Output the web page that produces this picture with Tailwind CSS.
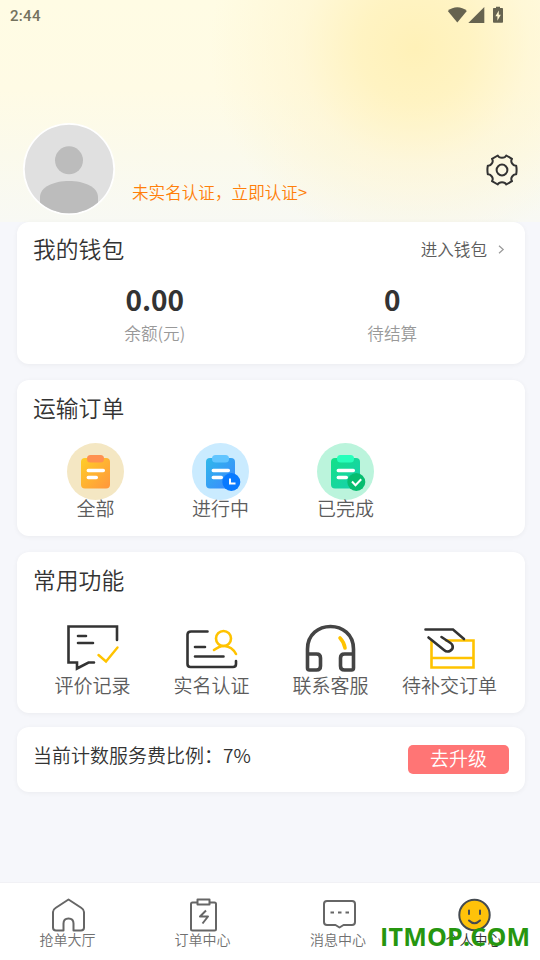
<!DOCTYPE html>
<html lang="zh-CN">
<head>
<meta charset="utf-8">
<meta name="viewport" content="width=device-width">
<title>个人中心</title>
<script src="https://cdn.jsdelivr.net/npm/@tailwindcss/browser@4"></script>
</head>
<body class="w-[540px] h-[960px] overflow-hidden bg-[#f6f7fb] font-['Noto_Sans_CJK_SC',sans-serif] font-[350] text-[#333]">
<div class="relative flex flex-col h-[960px]">
  <header class="h-[222px] shrink-0 flex flex-col bg-[radial-gradient(circle_at_415px_48px,#fff1b8_0px,#fff2bddd_55px,#fff3c878_115px,#fff6d600_205px),linear-gradient(180deg,#fffce4_0%,#fffbe5_40%,#fbfaec_70%,#f8f9f4_100%)]">
    <div class="h-8 flex items-center justify-between pl-[10px] pr-[35px]">
      <span class="font-['Roboto',sans-serif] font-medium text-[15px] leading-5 tracking-[0.3px] text-[#74725e]">2:44</span>
      <svg class="w-[58px] h-5 -mt-0.5" viewBox="0 0 58 20" fill="#666350">
        <path d="M.8 6C6.3 1.100 14.3 1.100 19.8 6L10.300 17.500z"/>
        <path d="M37.300 2.100v15.800H21.300z"/>
        <path fill-rule="evenodd" d="M49 3V1.700h4v1.300h2.200q.8 0 .8.8v13.200q0 .8-.8.8h-8.400q-.8 0-.8-.8V3.800q0-.8.8-.8zM51.800 5.600 48.400 11.300h2v4.500l3.400-6h-2z"/>
      </svg>
    </div>
    <div class="flex-1 flex items-end pl-[23px] pr-[22px]">
      <svg class="w-[92px] h-[92px] mb-[7px]" viewBox="0 0 92 92">
        <defs><clipPath id="face"><circle cx="46" cy="46" r="44.300"/></clipPath></defs>
        <circle cx="46" cy="46" r="46" fill="#fff"/>
        <g clip-path="url(#face)"><path fill="#e0e0e0" d="M0 0h92v92H0z"/><circle cx="46" cy="37.300" r="14" fill="#bcbcbc"/><path d="M17 92V74C17 64 31 58 46 58s29 6 29 16v18z" fill="#bcbcbc"/></g>
      </svg>
      <span class="ml-[17px] mb-[18px] text-[16.6px] leading-6 text-[#ff7f0a]">未实名认证，立即认证&gt;</span>
      <svg class="ml-auto mb-9 w-8 h-8" viewBox="0 0 32 32" fill="none" stroke="#333" stroke-width="2" stroke-linejoin="round">
        <path d="M11.800 1.500C13 4.500 19 4.500 20.200 1.500L26 4.800C24 7.500 26.800 12 30.200 11.700Q31 16 30.200 20.300C26.800 20 24 24.500 26 27.200L20.200 30.500C19 27.500 13 27.500 11.800 30.500L6 27.200C8 24.500 5.200 20 1.800 20.300Q1 16 1.800 11.700C5.200 12 8 7.500 6 4.800z"/>
        <circle cx="16" cy="16" r="5.400"/>
      </svg>
    </div>
  </header>

  <main class="flex-1 pl-[17px] pr-[15px]">
    <section class="h-[142px] rounded-xl bg-white shadow-[0_1px_5px_#0000000d] px-4">
      <div class="h-[55px] flex items-center justify-between pr-1">
        <h2 class="text-[22.8px] leading-8 pb-0.5">我的钱包</h2>
        <a class="flex items-center gap-[10px] text-[16.6px] text-[#5c5c5c]">进入钱包
          <svg class="w-2 h-[9px]" viewBox="0 0 8 9" fill="none" stroke="#999" stroke-width="1.200"><path d="m2 .7 4.200 3.800L2 8.300"/></svg>
        </a>
      </div>
      <div class="grid grid-cols-2 pt-[7px] pl-[3px] -mr-0.5 text-center">
        <div><div class="text-[28px] leading-[30px] font-bold">0.00</div><div class="mt-[7px] text-[16.6px] leading-6 text-[#999]">余额(元)</div></div>
        <div><div class="text-[28px] leading-[30px] font-bold">0</div><div class="mt-[7px] text-[16.6px] leading-6 text-[#999]">待结算</div></div>
      </div>
    </section>

    <section class="mt-4 h-[156px] rounded-xl bg-white shadow-[0_1px_5px_#0000000d]">
      <h2 class="h-[57px] flex items-center pl-4 text-[22.8px]">运输订单</h2>
      <div class="mt-1.5 grid grid-cols-[125px_125px_125px] pl-4 text-[19px] text-[#5c5c5c]">
        <div class="flex flex-col items-center">
          <svg class="w-[57px] h-[57px]" viewBox="0 0 57 57"><defs><linearGradient id="orange" x2="1" y2="1"><stop stop-color="#ffce27"/><stop offset="1" stop-color="#ff963d"/></linearGradient></defs>
            <circle cx="28.500" cy="28.500" r="28.500" fill="#f4e7c3"/><rect x="14" y="15" width="29" height="30.500" rx="4" fill="url(#orange)"/><rect x="20" y="12" width="17" height="7.500" rx="3.500" fill="#ff9150"/><path d="M21.300 27.500h15M21.300 34.500h8" stroke="#fff" stroke-width="3.500" stroke-linecap="round"/></svg>
          <span class="leading-[16px]">全部</span>
        </div>
        <div class="flex flex-col items-center">
          <svg class="w-[57px] h-[57px]" viewBox="0 0 57 57"><defs><linearGradient id="blue" x2="1" y2="1"><stop stop-color="#2fb9ea"/><stop offset="1" stop-color="#3c86ff"/></linearGradient></defs>
            <circle cx="28.500" cy="28.500" r="28.500" fill="#caebff"/><rect x="14" y="15" width="29" height="30.500" rx="4" fill="url(#blue)"/><rect x="20" y="12" width="17" height="7.500" rx="3.500" fill="#62c5ff"/><path d="M21.300 27.500h15M21.300 34.500h8" stroke="#fff" stroke-width="3.500" stroke-linecap="round"/><circle cx="39.300" cy="39" r="9" fill="#0879ff"/><path d="M38 35.500v5h5.500" fill="none" stroke="#fff" stroke-width="2"/></svg>
          <span class="leading-[16px]">进行中</span>
        </div>
        <div class="flex flex-col items-center">
          <svg class="w-[57px] h-[57px]" viewBox="0 0 57 57"><defs><linearGradient id="green" x2="1" y2="1"><stop stop-color="#13e187"/><stop offset="1" stop-color="#19ceb0"/></linearGradient></defs>
            <circle cx="28.500" cy="28.500" r="28.500" fill="#bbf4dc"/><rect x="14" y="15" width="29" height="30.500" rx="4" fill="url(#green)"/><rect x="20" y="12" width="17" height="7.500" rx="3.500" fill="#27ffbb"/><path d="M21.300 27.500h15M21.300 34.500h8" stroke="#fff" stroke-width="3.500" stroke-linecap="round"/><circle cx="39.300" cy="39" r="9" fill="#07bd70"/><path d="m35 38.500 3.500 3.700 5.700-6" fill="none" stroke="#fff" stroke-width="2"/></svg>
          <span class="leading-[16px]">已完成</span>
        </div>
      </div>
    </section>

    <section class="mt-4 h-[161px] rounded-xl bg-white shadow-[0_1px_5px_#0000000d]">
      <h2 class="h-[57px] flex items-center pl-4 text-[22.8px]">常用功能</h2>
      <div class="mt-[10px] grid grid-cols-[119px_119px_119px_119px] pl-4 text-[19px] text-[#5c5c5c]">
        <div class="flex flex-col items-center">
          <svg class="w-[54px] h-[54px]" viewBox="0 0 54 54" fill="none" stroke="#333" stroke-width="2.600" stroke-linecap="round"><path d="M51 21V7.500H2.500v36H11v6l11.500-6H28M12 17h8M12 24h15"/><path d="m32.500 36 7.500 6.500 11.500-14" stroke="#ffc300" stroke-width="2.400"/></svg>
          <span class="leading-[23px]">评价记录</span>
        </div>
        <div class="flex flex-col items-center">
          <svg class="w-[54px] h-[54px]" viewBox="0 0 54 54" fill="none" stroke="#333" stroke-width="2.600" stroke-linecap="round"><path d="M22.500 12.500H6Q2.500 12.500 2.500 15.500v29.500q0 3 3 3h42.500q3 0 3-3V42M10 28h10M10 37.500h28.500"/><g stroke="#ffc300" stroke-width="2.600"><circle cx="38.500" cy="19.500" r="7.500"/><path d="M29 31Q35 26.500 39.500 27 47 27.500 51 35"/></g></svg>
          <span class="leading-[23px]">实名认证</span>
        </div>
        <div class="flex flex-col items-center">
          <svg class="w-[54px] h-[54px]" viewBox="0 0 54 54" fill="none" stroke="#444" stroke-width="3.600" stroke-linecap="round"><path d="M3.500 35V30C3.500 0 49.500 0 49.500 30v5M3.500 35h9q4 0 4 4v8q0 4-4 4h-7q-2 0-2-2zM49.500 35h-9q-4 0-4 4v8q0 4 4 4h7q2 0 2-2z"/><path d="M36 19q4 4 5 10" stroke="#ffc300"/></svg>
          <span class="leading-[23px]">联系客服</span>
        </div>
        <div class="flex flex-col items-center">
          <svg class="w-[54px] h-[54px]" viewBox="0 0 54 54" fill="none" stroke="#333" stroke-width="2.600" stroke-linecap="round"><path d="M8.500 21.500H50.500V48.500H8.500zM8.500 39H50.500" stroke="#ffc300"/><path d="M5 17 20 30.500q5 2.500 7 0l-8-14z" fill="#fff" stroke="none"/><path d="M2.500 10.500H30L41 20M5.500 18.500 21 31C25 34.500 31 31 29.500 26.500Q29 25 27.500 24L18.500 18"/></svg>
          <span class="leading-[23px] whitespace-nowrap">待补交订单</span>
        </div>
      </div>
    </section>

    <section class="mt-[14px] h-[65px] rounded-xl bg-white shadow-[0_1px_5px_#0000000d] flex items-start justify-between pl-4 pr-4 text-[19px]">
      <span class="pt-[13px] leading-[29px]">当前计数服务费比例：7%</span>
      <button class="mt-[18px] w-[101px] h-[29px] rounded-[5px] bg-[#ff7575] text-white leading-[26px] pb-[3px]">去升级</button>
    </section>
  </main>

  <nav class="h-[78px] shrink-0 bg-white border-t border-[#f1f1f5] grid grid-cols-4 pt-[13px] text-[14px] text-[#707070]">
    <a class="flex flex-col items-center"><svg class="w-9 h-9" viewBox="0 0 36 36" fill="none" stroke="#666" stroke-width="2" stroke-linejoin="round"><path d="M18.500 3.500 31.500 12Q34 13.500 34 16V31.500q0 3-3 3H23.500V27.500q0-5-5-5t-5 5v7H6q-3 0-3-3V16q0-2.500 2.500-4z"/></svg><span class="leading-[15px]">抢单大厅</span></a>
    <a class="flex flex-col items-center"><svg class="w-9 h-9" viewBox="0 0 36 36" fill="none" stroke="#666" stroke-width="2" stroke-linejoin="round"><path d="M12.500 6.500H7.500Q6 6.500 6 8v25q0 1.500 1.500 1.500h22q1.500 0 1.500-1.500V8q0-1.500-1.500-1.500h-5M12.500 3.500h12v5h-12zM21 14.500l-6 6h8l-5.500 7"/></svg><span class="leading-[15px]">订单中心</span></a>
    <a class="flex flex-col items-center"><svg class="w-9 h-9" viewBox="0 0 36 36" fill="none" stroke="#666" stroke-width="2" stroke-linejoin="round"><path d="M7 5h25q3 0 3 3v18q0 3-3 3h-8.500l-4 2.500-4-2.500H7q-3 0-3-3V8q0-3 3-3z"/><path d="M10.500 16.500h3.500m4 0h3.500m4 0H29" stroke-width="2.200"/></svg><span class="leading-[15px] pl-px">消息中心</span></a>
    <a class="flex flex-col items-center"><svg class="w-9 h-9" viewBox="0 0 36 36" fill="none" stroke="#444a50" stroke-width="2" stroke-linecap="round"><circle cx="19.500" cy="19" r="15.200" fill="#ffc20a"/><path d="M14 14.500v3.500M25 14.500v3.500M14 24.500q5.500 5.500 11 0"/></svg><span class="leading-[15px] pl-0.5 text-[#333]">个人中心</span></a>
  </nav>
  <div class="absolute left-[380px] top-[919px] leading-[34px] font-['Open_Sans',sans-serif] font-bold text-[25px] tracking-[0.2px] text-[#26960f] whitespace-nowrap">ITMOP.COM</div>
</div>
</body>
</html>
